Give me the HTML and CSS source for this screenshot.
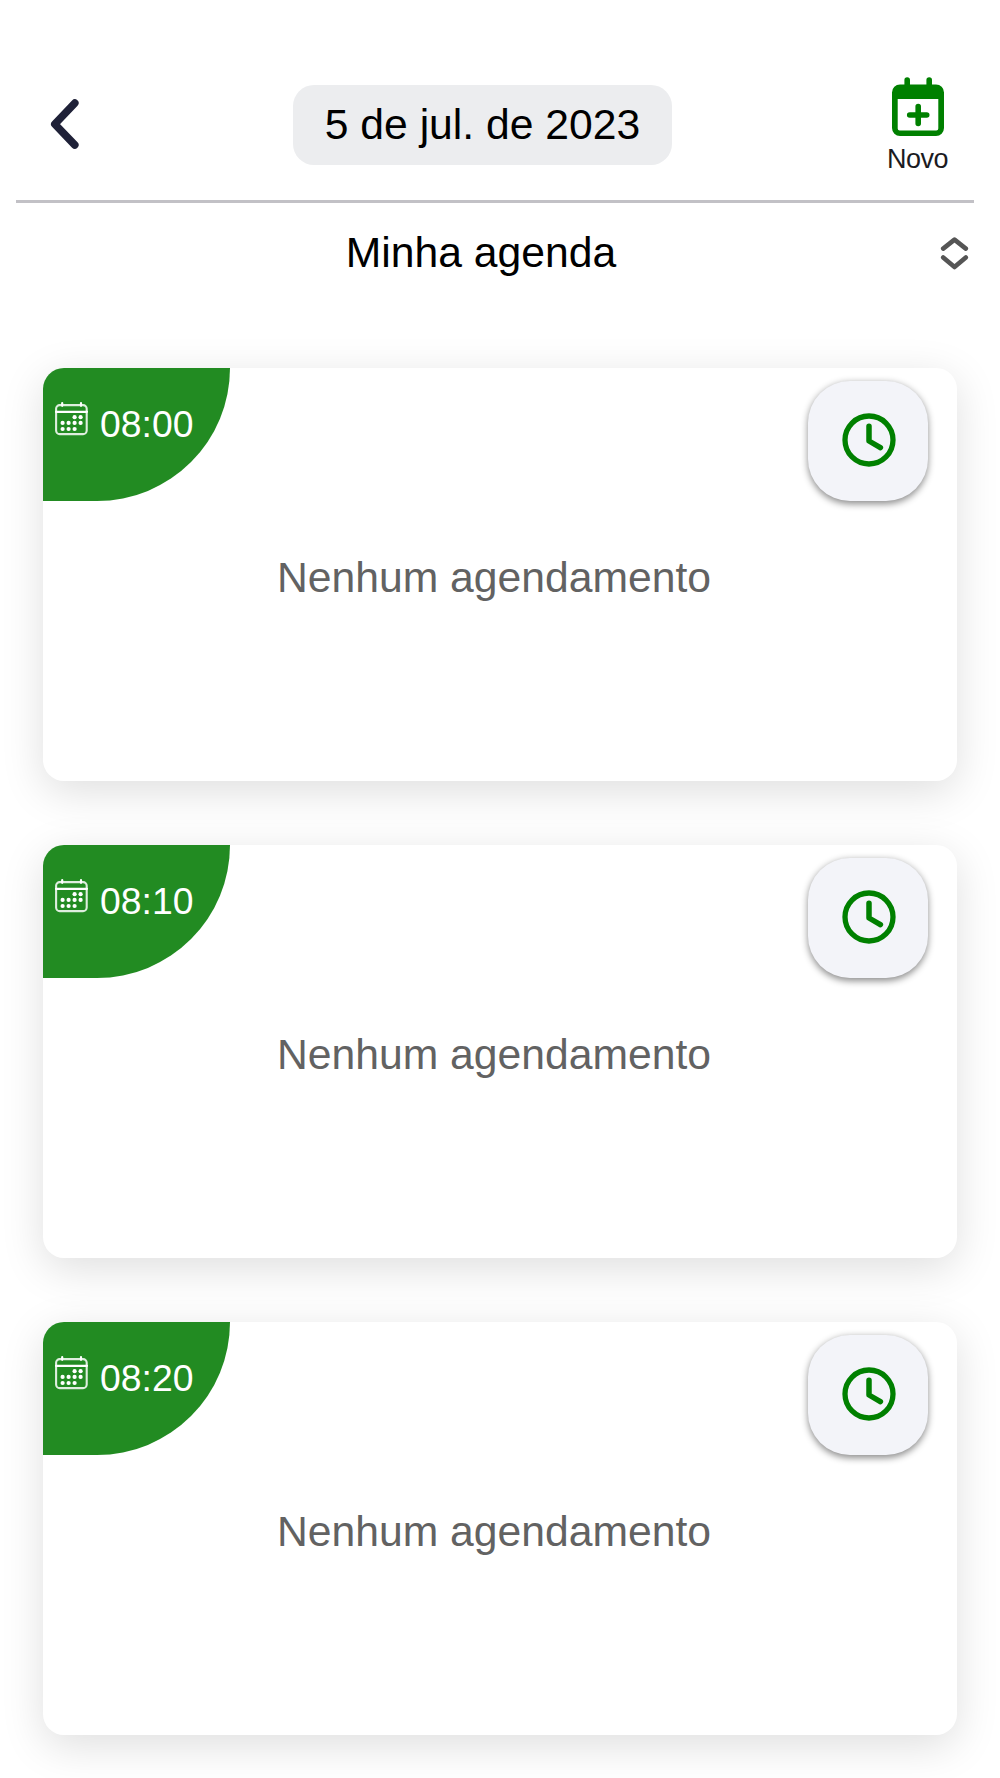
FILE: index.html
```html
<!DOCTYPE html>
<html lang="pt-BR">
<head>
<meta charset="utf-8">
<title>Minha agenda</title>
<link rel="stylesheet" href="styles.css">
</head>
<body>
<svg class="symbols" aria-hidden="true">
  <symbol id="calendar" viewBox="0 0 34 34">
    <rect x="1.1" y="3.1" width="30.6" height="29" rx="3.6" fill="none" stroke="#fff" stroke-opacity=".85" stroke-width="2.100"/>
    <path d="M1 9.800h31M7.200 1.200v2.600M26 1.200v2.600" fill="none" stroke="#fff" stroke-width="2.200" stroke-linecap="round"/>
    <g fill="#fff"><circle cx="19.600" cy="15.200" r="2.100"/><circle cx="25.600" cy="15.200" r="2.100"/><circle cx="7.600" cy="20.900" r="2.100"/><circle cx="13.600" cy="20.900" r="2.100"/><circle cx="19.600" cy="20.900" r="2.100"/><circle cx="25.600" cy="20.900" r="2.100"/><circle cx="7.600" cy="27" r="2.100"/><circle cx="13.600" cy="27" r="2.100"/><circle cx="19.600" cy="27" r="2.100"/></g>
  </symbol>
  <symbol id="clock" viewBox="0 0 54 54">
    <circle cx="27" cy="27" r="24" fill="none" stroke="#008000" stroke-width="5.3"/>
    <path d="M27 13.300v14.700l11.400 6.700" fill="none" stroke="#008000" stroke-width="5.500" stroke-linecap="round" stroke-linejoin="round"/>
  </symbol>
</svg>
<header class="topbar">
  <button class="back" aria-label="Voltar"><svg width="30" height="52" viewBox="0 0 30 52"><path d="M24.800 5.100 4.800 26.200 24.800 47" fill="none" stroke="#1f2138" stroke-width="7.600" stroke-linecap="round" stroke-linejoin="round"/></svg></button>
  <button class="date">5 de jul. de 2023</button>
  <button class="new">
    <svg width="52" height="60" viewBox="0 0 52 60"><path d="M15.200 3v9M37.200 3v9" stroke="#008000" stroke-width="5.600" stroke-linecap="round"/><path fill="#008000" fill-rule="evenodd" d="M8 7.500h36a8 8 0 0 1 8 8v35.500a8 8 0 0 1-8 8H8a8 8 0 0 1-8-8V15.500a8 8 0 0 1 8-8ZM5.700 22v29.500a2 2 0 0 0 2 2h36.600a2 2 0 0 0 2-2V22Z"/><path d="M26.200 29.500v17M17.700 38h17" stroke="#008000" stroke-width="5.600" stroke-linecap="round"/></svg>
    <span>Novo</span>
  </button>
</header>
<div class="picker">
  <span>Minha agenda</span>
  <svg width="30" height="36" viewBox="0 0 30 36"><path d="M4.200 13.600 15.500 4.600l11.300 9M4.200 22.400l11.300 9.600 11.300-9.600" fill="none" stroke="#555" stroke-width="4.600" stroke-linecap="round" stroke-linejoin="round"/></svg>
</div>
<main class="slots">
  <article class="card">
    <div class="row"><div class="time"><svg class="cal"><use href="#calendar"/></svg><span>08:00</span></div><button class="action" aria-label="Horário"><svg class="clock"><use href="#clock"/></svg></button></div>
    <p class="empty">Nenhum agendamento</p>
  </article>
  <article class="card">
    <div class="row"><div class="time"><svg class="cal"><use href="#calendar"/></svg><span>08:10</span></div><button class="action" aria-label="Horário"><svg class="clock"><use href="#clock"/></svg></button></div>
    <p class="empty">Nenhum agendamento</p>
  </article>
  <article class="card">
    <div class="row"><div class="time"><svg class="cal"><use href="#calendar"/></svg><span>08:20</span></div><button class="action" aria-label="Horário"><svg class="clock"><use href="#clock"/></svg></button></div>
    <p class="empty">Nenhum agendamento</p>
  </article>
</main>
</body>
</html>
```
FILE: styles.css
```css
* { box-sizing: border-box; }
body {
  margin: 0;
  height: 1778px;
  overflow: hidden;
  background: #fff;
  color: #000;
  font: 42.67px/48px "Liberation Sans", Arial, sans-serif;
}
svg { display: block; flex: none; }
button { border: 0; padding: 0; background: none; color: inherit; font: inherit; }
.symbols { display: none; }
.topbar {
  display: flex;
  justify-content: space-between;
  align-items: flex-start;
  height: 203px;
  margin: 0 26px 0 16px;
  padding: 77px 24px 0 33.5px;
  border-bottom: 3px solid #c2c1c6;
}
.back { margin-top: 21px; }
.date {
  width: 379px;
  height: 80px;
  margin: 8px 0 0 .5px;
  padding-bottom: 3px;
  border-radius: 21px;
  background: #ecedef;
}
.new {
  display: flex;
  flex-direction: column;
  align-items: center;
  width: 65px;
  color: #1b1b1f;
  font-size: 27px;
  line-height: 32px;
  letter-spacing: -.5px;
}
.new span { margin-top: 6px; }
.picker {
  display: grid;
  grid-template-columns: 1fr 30px;
  align-items: center;
  height: 100px;
  padding: 0 31px 0 23px;
  text-align: center;
}
.picker span { padding: 0 0 3px; }
.slots {
  display: flex;
  flex-direction: column;
  gap: 64px;
  padding: 65px 43px 0;
}
.card {
  height: 413px;
  flex: none;
  border-radius: 21px;
  background: #fff;
  box-shadow: 0 10.67px 42.67px rgba(0, 0, 0, .13);
}
.row { display: flex; justify-content: space-between; height: 133px; }
.time {
  display: flex;
  width: 187px;
  height: 133px;
  padding: 34px 0 0 12px;
  gap: 11px;
  border-radius: 21px 0 133px 0;
  background: #228b22;
  color: #fff;
  font-size: 37.33px;
  line-height: 44px;
}
.cal { width: 34px; height: 34px; }
.action {
  display: grid;
  place-items: center;
  width: 120px;
  height: 120px;
  margin: 13px 29px 0 0;
  border-radius: 42px;
  background: #f3f4f9;
  box-shadow: 0 2.67px 7px rgba(0, 0, 0, .45);
}
.clock { width: 54px; height: 54px; margin: 0 0 2px 2px; }
.empty { margin: 52px 0 0; padding-right: 12px; color: #626262; text-align: center; }
```
